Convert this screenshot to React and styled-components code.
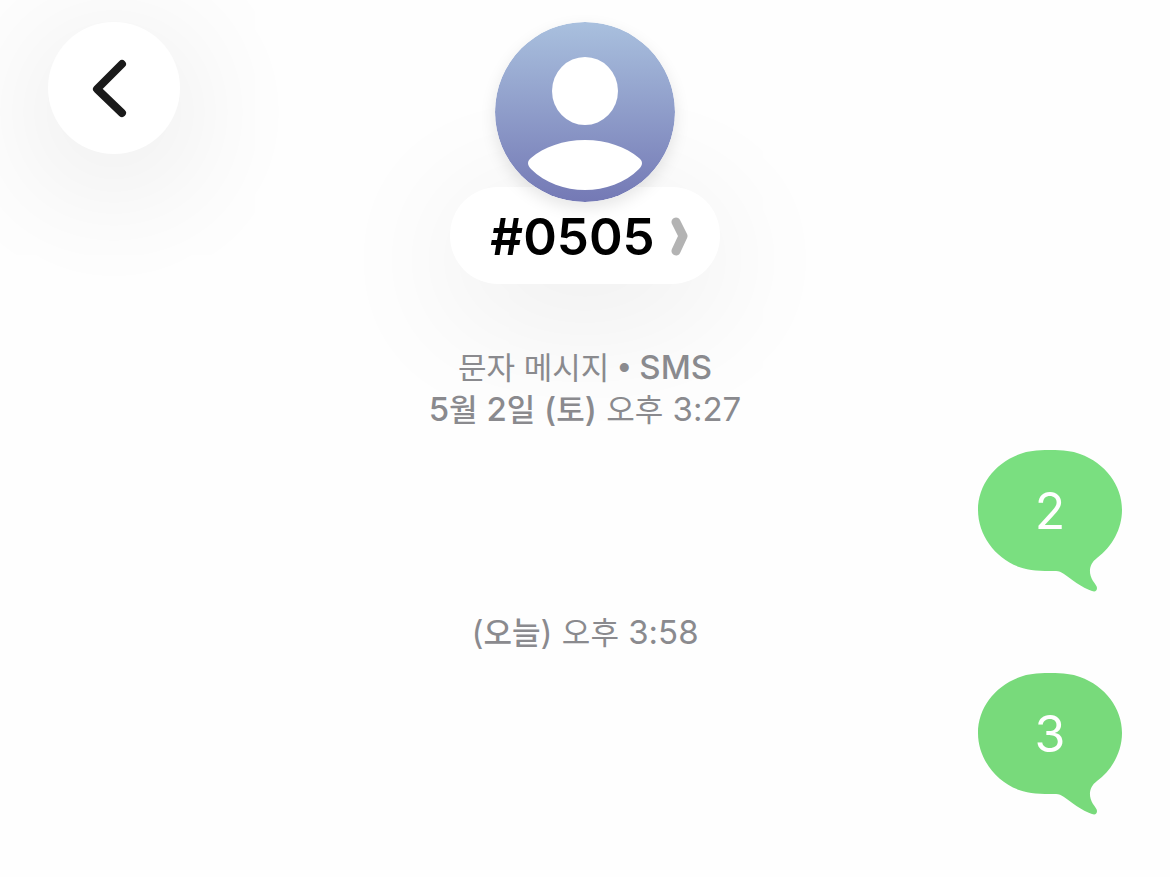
import React from "react"
import styled, { createGlobalStyle } from "styled-components"

const GlobalStyle = createGlobalStyle`
  * {
    box-sizing: border-box;
  }

  body {
    margin: 0;
    background-color: #fefefe;
    color: #000;
    font-family: Inter, "Noto Sans CJK KR", sans-serif;
    overflow-x: hidden;
  }

  button {
    border: 0;
    padding: 0;
    background: none;
    color: inherit;
    font: inherit;
    cursor: pointer;
  }
`

const Header = styled.header`
  display: grid;
  grid-template-columns: 1fr auto 1fr;
  align-items: start;
  padding: 22px 48px 0;
`

const BackButton = styled.button`
  width: 132px;
  height: 132px;
  border-radius: 50%;
  background-color: #fff;
  box-shadow: 0 24px 140px rgba(0, 0, 0, 0.12);

  svg {
    display: block;
  }
`

const Contact = styled.button`
  display: flex;
  flex-direction: column;
  align-items: center;
`

const Avatar = styled.svg`
  position: relative;
  z-index: 1;
  width: 180px;
  height: 180px;
  border-radius: 50%;
  box-shadow: 0 6px 16px rgba(0, 0, 0, 0.1);
`

const NamePill = styled.span`
  display: flex;
  align-items: center;
  gap: 16px;
  height: 97px;
  margin-top: -15px;
  padding: 2px 32px 0 40px;
  border-radius: 48px;
  background-color: #fff;
  box-shadow: 0 24px 140px rgba(0, 0, 0, 0.09);
`

const Name = styled.span`
  font-size: 51px;
  font-weight: 600;
  line-height: 60px;
`

const Thread = styled.main`
  display: flex;
  flex-direction: column;
  gap: 20px;
  padding: 62px 48px 48px;
`

const Stamp = styled.p`
  margin: 0;
  color: #8a8a8e;
  font-size: 33px;
  line-height: 42px;
  text-align: center;
`

const Strong = styled.span`
  font-weight: 500;
`

const Hangul = styled.span`
  font-size: 31px;
  font-weight: ${props => (props.$medium ? 500 : 400)};
  line-height: 1;
`

const Dot = styled.span`
  font-family: "Liberation Sans", sans-serif;
  line-height: 1;
`

const Bubble = styled.div`
  position: relative;
  align-self: flex-end;
  width: 144px;
  height: 141px;
  color: #fff;
  font-size: 50px;
  line-height: 122px;
  text-align: center;
`

const BubbleShape = styled.svg`
  position: absolute;
  inset: 0;
  z-index: -1;
  fill: ${props => props.$color};
`

function Message({ color, children }) {
  return (
    <Bubble>
      <BubbleShape
        $color={color}
        width="144"
        height="142"
        viewBox="0 0 144 142"
        aria-hidden="true"
      >
        <path d="M72 0C86 0 94 1 102 4C127 13 144 35 144 60C144 79 134 97 119 108C111 114 110 123 115 131C117 134 119 136 119 138C119 141 117 142 114 141C104 138 93 129 86 124C83 122 81 121 78 121C62 121 52 121 41 117C17 108 0 85 0 60C0 35 17 13 42 4C50 1 58 0 72 0Z" />
      </BubbleShape>
      {children}
    </Bubble>
  )
}

export default function App() {
  return (
    <>
      <GlobalStyle />

      <Header>
        <BackButton aria-label="뒤로">
          <svg width="132" height="132" viewBox="0 0 132 132" fill="none">
            <path
              d="M74 42L49 67L74 91"
              stroke="#1a1a1a"
              strokeWidth="8"
              strokeLinecap="round"
              strokeLinejoin="round"
            />
          </svg>
        </BackButton>

        <Contact>
          <Avatar viewBox="0 0 180 180" aria-hidden="true">
            <defs>
              <linearGradient id="avatar" x1="0" y1="0" x2="0" y2="1">
                <stop offset="0" stopColor="#a9c0de" />
                <stop offset="1" stopColor="#7479b5" />
              </linearGradient>
            </defs>
            <circle cx="90" cy="90" r="90" fill="url(#avatar)" />
            <ellipse cx="90" cy="69" rx="33" ry="34" fill="#fff" />
            <path
              d="M90 118C112 118 131 125 144 136C148 139 148 143 144 147C130 161 110 168 90 168C70 168 50 161 36 147C32 143 32 139 36 136C49 125 68 118 90 118Z"
              fill="#fff"
            />
          </Avatar>
          <NamePill>
            <Name>#0505</Name>
            <svg width="17" height="40" viewBox="0 0 17 40" fill="none">
              <path
                d="M5 5L12 19L5 34"
                stroke="#b3b3b3"
                strokeWidth="9"
                strokeLinecap="round"
                strokeLinejoin="round"
              />
            </svg>
          </NamePill>
        </Contact>
      </Header>

      <Thread>
        <Stamp>
          <Hangul>문자 메시지</Hangul> <Dot>•</Dot> <Strong>SMS</Strong>
          <br />
          <Strong>
            5<Hangul $medium>월</Hangul> 2<Hangul $medium>일</Hangul> (
            <Hangul $medium>토</Hangul>)
          </Strong>{" "}
          <Hangul>오후</Hangul> 3:27
        </Stamp>
        <Message color="#7adf80">2</Message>
        <Stamp>
          (<Hangul $medium>오늘</Hangul>) <Hangul>오후</Hangul> 3:58
        </Stamp>
        <Message color="#78da7b">3</Message>
      </Thread>
    </>
  )
}
